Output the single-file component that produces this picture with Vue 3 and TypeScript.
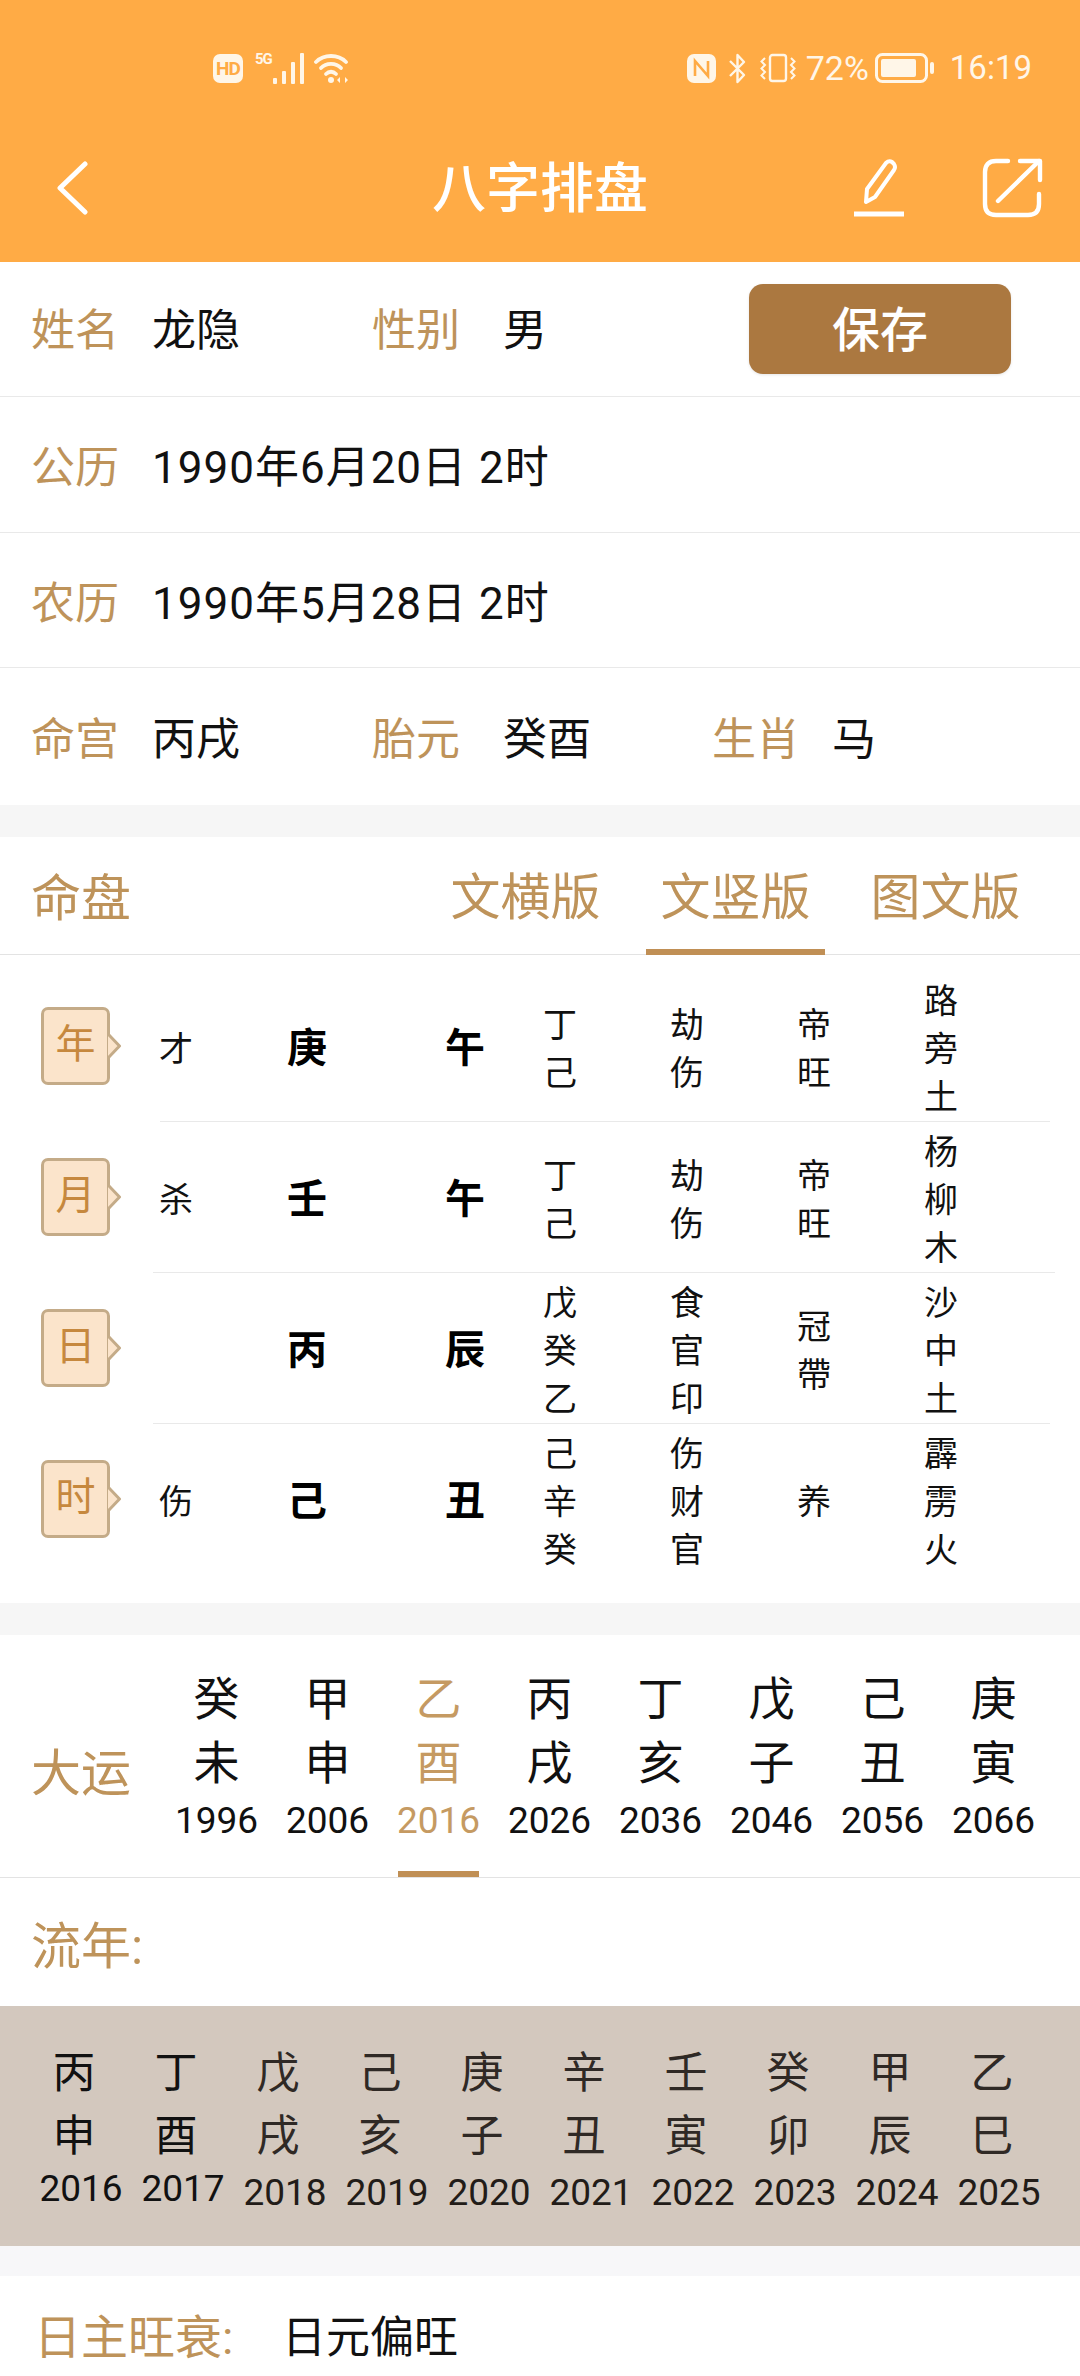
<script setup lang="ts">
interface PillarRow {
  tag: string
  god: string
  stem: string
  branch: string
  hidden: string[]
  tenGods: string[]
  stage: string[]
  nayin: string[]
  lineClass: string
}

const pillars: PillarRow[] = [
  { tag: '年', god: '才', stem: '庚', branch: '午', hidden: ['丁', '己'], tenGods: ['劫', '伤'], stage: ['帝', '旺'], nayin: ['路', '旁', '土'], lineClass: 'sep-a' },
  { tag: '月', god: '杀', stem: '壬', branch: '午', hidden: ['丁', '己'], tenGods: ['劫', '伤'], stage: ['帝', '旺'], nayin: ['杨', '柳', '木'], lineClass: 'sep-b' },
  { tag: '日', god: '', stem: '丙', branch: '辰', hidden: ['戊', '癸', '乙'], tenGods: ['食', '官', '印'], stage: ['冠', '帶'], nayin: ['沙', '中', '土'], lineClass: 'sep-c' },
  { tag: '时', god: '伤', stem: '己', branch: '丑', hidden: ['己', '辛', '癸'], tenGods: ['伤', '财', '官'], stage: ['养'], nayin: ['霹', '雳', '火'], lineClass: '' },
]

const dayun = [
  ['癸', '未', '1996'], ['甲', '申', '2006'], ['乙', '酉', '2016'], ['丙', '戌', '2026'],
  ['丁', '亥', '2036'], ['戊', '子', '2046'], ['己', '丑', '2056'], ['庚', '寅', '2066'],
]

const liunian = [
  ['丙', '申', '2016'], ['丁', '酉', '2017'], ['戊', '戌', '2018'], ['己', '亥', '2019'], ['庚', '子', '2020'],
  ['辛', '丑', '2021'], ['壬', '寅', '2022'], ['癸', '卯', '2023'], ['甲', '辰', '2024'], ['乙', '巳', '2025'],
]
</script>

<template>
  <div class="page">
    <header class="header">
      <div class="status">
        <div class="status-left">
          <span class="hd">HD</span>
          <span class="fiveg">5G</span>
          <svg class="signal" width="31" height="31" viewBox="0 0 31 31" fill="#fff6e8">
            <rect x="0" y="25" width="4" height="6" rx="1" />
            <rect x="9" y="18" width="4" height="13" rx="1" />
            <rect x="18" y="9" width="4" height="22" rx="1" />
            <rect x="27" y="0" width="4" height="31" rx="1" />
          </svg>
          <svg class="wifi" width="37" height="31" viewBox="0 0 37 31" fill="none" stroke="#fff6e8" stroke-width="3.8" stroke-linecap="round">
            <path d="M2 9 C10 1 24 1 32 9" />
            <path d="M7 15 C12 9.5 22 9.5 27 15" />
            <path d="M12 21 C15 18 19 18 22 21" />
            <circle cx="17" cy="27" r="3" fill="#fff6e8" stroke="none" />
            <path d="M26 24 L23 27 L26 30 Z M31 24 L34 27 L31 30 Z" fill="#fff6e8" stroke="none" />
          </svg>
        </div>
        <div class="status-right">
          <svg width="29" height="29" viewBox="0 0 29 29">
            <rect x="0" y="0" width="29" height="29" rx="7" fill="#fff6e8" />
            <path d="M8 22 V7 L21 22 V7" fill="none" stroke="#ffab45" stroke-width="2.6" />
          </svg>
          <svg width="19" height="31" viewBox="0 0 19 31" fill="none" stroke="#fff6e8" stroke-width="2.4" stroke-linejoin="round">
            <path d="M2 8 L16 22 L9.5 29 V2 L16 9 L2 23" />
          </svg>
          <svg class="vibrate" width="38" height="30" viewBox="0 0 38 30" fill="none" stroke="#fff6e8" stroke-width="2.4">
            <rect x="11" y="2" width="16" height="26" rx="2.5" />
            <path d="M6 5 L2.5 8.5 L6 12 L2.5 15.5 L6 19 L2.5 22.5 L6 26" stroke-width="2" />
            <path d="M32 5 L35.5 8.5 L32 12 L35.5 15.5 L32 19 L35.5 22.5 L32 26" stroke-width="2" />
          </svg>
          <span class="pct">72%</span>
          <svg class="battery" width="59" height="30" viewBox="0 0 59 30">
            <rect x="1.5" y="1.5" width="50" height="27" rx="6" fill="none" stroke="#fff6e8" stroke-width="3" />
            <rect x="6" y="6" width="35" height="18" rx="2" fill="#fff6e8" />
            <rect x="55" y="9" width="4" height="12" rx="2" fill="#fff6e8" />
          </svg>
          <span class="clock">16:19</span>
        </div>
      </div>
      <nav class="nav">
        <div class="nav-left">
          <svg width="32" height="54" viewBox="0 0 32 54" fill="none" stroke="#fff" stroke-width="5" stroke-linecap="round" stroke-linejoin="round">
            <path d="M29 3 L4 27 L29 51" />
          </svg>
        </div>
        <h1 class="title">八字排盘</h1>
        <div class="nav-right">
          <svg width="54" height="60" viewBox="0 0 54 60" fill="none" stroke="#fff" stroke-width="4" stroke-linejoin="round">
            <path d="M14 44 L15 31 L34 5 Q37 2 40 4 L42 6 Q44 9 42 12 L23 39 Z" />
            <path d="M2 56 H52" stroke-width="5" />
          </svg>
          <svg width="62" height="60" viewBox="0 0 62 60" fill="none" stroke="#fff" stroke-width="4.4" stroke-linecap="round" stroke-linejoin="round">
            <path d="M26 3 H14 Q3 3 3 14 V46 Q3 57 14 57 H46 Q57 57 57 46 V36" />
            <path d="M16 43 L57 3" />
            <path d="M38 3 H58 V22" />
          </svg>
        </div>
      </nav>
    </header>

    <section class="info">
      <div class="info-row first-row">
        <span class="label">姓名</span><span class="value name-val">龙隐</span>
        <span class="label">性别</span><span class="value">男</span>
        <button class="save">保存</button>
      </div>
      <div class="info-row">
        <span class="label">公历</span><span class="value date">1990年6月20日 2时</span>
      </div>
      <div class="info-row third-row">
        <span class="label">农历</span><span class="value date">1990年5月28日 2时</span>
      </div>
      <div class="info-row last-row">
        <span class="label">命宫</span><span class="value name-val">丙戌</span>
        <span class="label">胎元</span><span class="value yuan-val">癸酉</span>
        <span class="label sx-label">生肖</span><span class="value">马</span>
      </div>
    </section>

    <div class="gap gap-a"></div>

    <section class="chart-head">
      <h2 class="big-label">命盘</h2>
      <div class="tabs">
        <span class="tab">文横版</span>
        <span class="tab active">文竖版</span>
        <span class="tab">图文版</span>
      </div>
    </section>

    <section class="chart">
      <template v-for="p in pillars" :key="p.tag">
        <div class="pillar">
          <div class="tag-cell">
            <div class="tag">
              {{ p.tag }}
              <svg class="tag-arrow" width="15" height="26" viewBox="0 0 15 26">
                <path d="M1 1 L12.5 13 L1 25" fill="#fbe4cb" stroke="#c4ab88" stroke-width="3" stroke-linejoin="round" />
              </svg>
            </div>
          </div>
          <div class="cell">{{ p.god }}</div>
          <div class="cell strong">{{ p.stem }}</div>
          <div class="cell strong">{{ p.branch }}</div>
          <div class="cell"><span v-for="(c, i) in p.hidden" :key="i">{{ c }}</span></div>
          <div class="cell"><span v-for="(c, i) in p.tenGods" :key="i">{{ c }}</span></div>
          <div class="cell"><span v-for="(c, i) in p.stage" :key="i">{{ c }}</span></div>
          <div class="cell"><span v-for="(c, i) in p.nayin" :key="i">{{ c }}</span></div>
        </div>
        <div v-if="p.lineClass" class="sep" :class="p.lineClass"></div>
      </template>
    </section>

    <div class="gap gap-b"></div>

    <section class="dayun">
      <h2 class="big-label dayun-label">大运</h2>
      <div class="dayun-grid">
        <div v-for="(d, i) in dayun" :key="d[2]" class="dayun-col" :class="{ current: i === 2 }">
          <span>{{ d[0] }}</span>
          <span>{{ d[1] }}</span>
          <span class="dy-year">{{ d[2] }}</span>
        </div>
      </div>
    </section>

    <div class="liunian-head"><h2 class="big-label">流年:</h2></div>

    <section class="liunian">
      <div v-for="(l, i) in liunian" :key="l[2]" class="ln-col" :class="{ early: i < 2 }">
        <span class="ln-char">{{ l[0] }}</span>
        <span class="ln-char">{{ l[1] }}</span>
        <span class="ln-year">{{ l[2] }}</span>
      </div>
    </section>

    <div class="gap gap-c"></div>

    <section class="strength">
      <span class="strength-label">日主旺衰:</span>
      <span class="strength-value">日元偏旺</span>
    </section>
  </div>
</template>

<style scoped>
.page {
  width: 1080px;
  height: 2376px;
  overflow: hidden;
  background: #fff;
  color: #111;
  font-family: Roboto, "Noto Sans CJK SC", sans-serif;
}

/* header */
.header {
  height: 262px;
  background: #ffab45;
}
.status {
  height: 136px;
  display: flex;
  align-items: center;
  justify-content: space-between;
  padding: 0 48px 0 213px;
  color: #fff6e8;
}
.status-left,
.status-right {
  display: flex;
  align-items: center;
}
.hd {
  width: 30px;
  height: 29px;
  border-radius: 7px;
  background: #fff6e8;
  color: #ffab45;
  font-size: 19px;
  font-weight: 700;
  line-height: 29px;
  text-align: center;
  letter-spacing: -1px;
}
.fiveg {
  width: 17px;
  margin: -18px 0 0 12px;
  font-size: 15px;
  font-weight: 700;
  line-height: 13px;
  letter-spacing: -1px;
}
.signal {
  margin-left: 1px;
}
.wifi {
  margin-left: 10px;
}
.status-right svg + svg {
  margin-left: 12px;
}
.pct {
  margin-left: 9px;
  font-size: 34px;
  line-height: 36px;
}
.status-right .battery {
  margin-left: 6px;
}
.clock {
  margin-left: 16px;
  font-size: 33px;
  line-height: 36px;
}
.nav {
  height: 104px;
  display: grid;
  grid-template-columns: 1fr auto 1fr;
  align-items: center;
}
.nav-left {
  padding-left: 56px;
  display: flex;
}
.nav-right {
  display: flex;
  justify-content: flex-end;
  align-items: center;
  gap: 76px;
  padding-right: 36px;
}
.title {
  margin: 0;
  padding-top: 3px;
  color: #fff;
  font-size: 54px;
  font-weight: 500;
  line-height: 70px;
}

/* info */
.info-row {
  height: 136px;
  box-sizing: border-box;
  display: grid;
  grid-template-columns: 121px 220px 131px 209px 120px 1fr;
  align-items: center;
  padding: 7px 0 0 31px;
  border-bottom: 1px solid #e9e9e9;
  font-size: 44px;
  line-height: 60px;
}
.first-row {
  height: 135px;
  padding-top: 3px;
  grid-template-columns: 121px 220px 131px 246px 262px;
}
.third-row {
  height: 135px;
}
.last-row {
  height: 137px;
  border-bottom: 0;
}
.info-row .date {
  grid-column: 2 / -1;
  letter-spacing: 1px;
}
.label {
  color: #be935a;
}
.value {
  color: #111;
}
.save {
  height: 90px;
  width: 262px;
  margin-top: -3px;
  padding: 3px 0 0;
  border: 0;
  border-radius: 14px;
  background: #ab7840;
  color: #fff;
  font-family: inherit;
  font-size: 48px;
  font-weight: 500;
  line-height: 84px;
  box-shadow: 0 1px 3px rgba(0, 0, 0, 0.1);
}

.gap {
  background: #f6f6f6;
}
.gap-a {
  height: 32px;
}
.gap-b {
  height: 32px;
}
.gap-c {
  height: 30px;
  background: #f7f7f9;
}

/* chart head */
.chart-head {
  height: 118px;
  box-sizing: border-box;
  display: flex;
  align-items: center;
  justify-content: space-between;
  padding: 7px 45px 0 31px;
  border-bottom: 1px solid #e3e3e3;
}
.big-label {
  margin: 0;
  color: #be935a;
  font-size: 50px;
  font-weight: 400;
  line-height: 66px;
}
.tabs {
  display: flex;
  gap: 31px;
  align-self: stretch;
}
.tab {
  position: relative;
  width: 179px;
  color: #be935a;
  font-size: 50px;
  line-height: 108px;
  text-align: center;
}
.tab.active::after {
  content: "";
  position: absolute;
  left: 0;
  right: 0;
  bottom: -1px;
  height: 6px;
  background: #c08f55;
}

/* chart */
.chart {
  padding: 16px 0 29px;
}
.pillar {
  height: 150px;
  display: grid;
  grid-template-columns: 153px 46px 216px 100px 90px 164px 90px 164px;
  align-items: center;
  font-size: 34px;
  line-height: 48px;
}
.tag-cell {
  padding-left: 41px;
}
.tag {
  position: relative;
  box-sizing: border-box;
  width: 69px;
  height: 78px;
  border: 3px solid #c4ab88;
  border-radius: 7px;
  background: #fbe4cb;
  color: #c6883e;
  font-size: 40px;
  line-height: 70px;
  text-align: center;
}
.tag-arrow {
  position: absolute;
  top: 23px;
  left: 63px;
}
.cell {
  display: flex;
  flex-direction: column;
  align-items: center;
  padding-top: 6px;
  text-align: center;
}
.strong {
  font-size: 40px;
  font-weight: 700;
  color: #000;
}
.sep {
  height: 1px;
  background: #e9e9e9;
}
.sep-a {
  margin: 0 30px 0 160px;
}
.sep-b {
  margin: 0 25px 0 153px;
}
.sep-c {
  margin: 0 30px 0 153px;
}

/* dayun */
.dayun {
  height: 243px;
  box-sizing: border-box;
  display: flex;
  border-bottom: 1px solid #e3e3e3;
}
.dayun-label {
  width: 161px;
  flex: none;
  box-sizing: border-box;
  padding: 106px 0 0 31px;
}
.dayun-grid {
  display: grid;
  grid-template-columns: repeat(8, 111px);
}
.dayun-col {
  position: relative;
  display: flex;
  flex-direction: column;
  align-items: center;
  padding-top: 32px;
  font-size: 46px;
  line-height: 64px;
}
.dy-year {
  font-size: 37px;
  line-height: 52px;
}
.dayun-col.current {
  color: #c59a62;
}
.dayun-col.current::after {
  content: "";
  position: absolute;
  left: 15px;
  width: 81px;
  bottom: 0;
  height: 6px;
  background: #c08f55;
}

/* liunian */
.liunian-head {
  height: 128px;
  box-sizing: border-box;
  display: flex;
  align-items: center;
  padding: 10px 0 0 31px;
}
.liunian {
  height: 240px;
  box-sizing: border-box;
  display: grid;
  grid-template-columns: repeat(10, 102px);
  padding: 36px 0 0 30px;
  background: #d3c8be;
  color: #2f2925;
}
.ln-col {
  display: flex;
  flex-direction: column;
  align-items: center;
}
.ln-col.early {
  color: #111;
}
.ln-char {
  width: 100%;
  box-sizing: border-box;
  padding-right: 14px;
  font-size: 43px;
  line-height: 63px;
  text-align: center;
}
.ln-year {
  color: #221c18;
  font-size: 37px;
  line-height: 49px;
}
.early .ln-year {
  margin-top: -4px;
  color: #111;
}

/* strength */
.strength {
  height: 100px;
  box-sizing: border-box;
  display: flex;
  align-items: center;
  padding: 24px 0 0 34px;
}
.strength-label {
  width: 248px;
  color: #be935a;
  font-size: 47px;
  line-height: 60px;
}
.strength-value {
  font-size: 44px;
  line-height: 60px;
}
</style>

<style>
html,
body {
  margin: 0;
  background: #fff;
}
</style>
